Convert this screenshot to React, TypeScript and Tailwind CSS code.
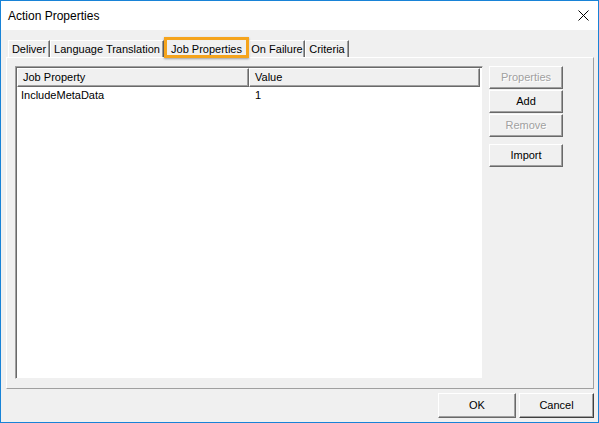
import React from "react";

/** Classic Win32 dialog: Action Properties with the Job Properties tab selected. */

const font = { fontFamily: '"Liberation Sans", Arial, sans-serif' };

interface TabDef { label: string; w: string; selected?: boolean }

const tabs: TabDef[] = [
  { label: "Deliver", w: "w-[42px]" },
  { label: "Language Translation", w: "w-[114px]" },
  { label: "Job Properties", w: "w-[85px]", selected: true },
  { label: "On Failure", w: "w-[56px]" },
  { label: "Criteria", w: "w-[44px]" },
];

function Tab({ t }: { t: TabDef }) {
  if (t.selected) {
    return (
      <div className={`${t.w} relative z-10 -mb-px h-[21px] bg-[#f0f0f0] border-[3px] border-[#f5a41c] shadow-[0_1px_2px_rgba(0,0,0,0.35)] flex items-start justify-center pt-[1px] text-[11px] text-black`}>
        {t.label}
      </div>
    );
  }
  return (
    <div className={`${t.w} h-[17px] bg-[#f0f0f0] border-l border-t border-white border-r border-r-[#696969] shadow-[inset_-1px_0_0_#a0a0a0] flex items-center justify-center pt-[1px] text-[11px] text-black`}>
      {t.label}
    </div>
  );
}

function SideButton({ label, disabled, className = "" }: { label: string; disabled?: boolean; className?: string }) {
  return (
    <div className={`w-[74px] h-[23px] bg-[#f0f0f0] border-t border-l border-white border-r border-b border-r-[#696969] border-b-[#696969] shadow-[inset_-1px_-1px_0_#a0a0a0] flex items-center justify-center text-[11px] ${disabled ? "text-[#a0a0a0] [text-shadow:1px_1px_0_#fff]" : "text-black"} ${className}`}>
      {label}
    </div>
  );
}

function DialogButton({ label, w, dark }: { label: string; w: string; dark?: boolean }) {
  return (
    <div className={`${w} h-[25px] bg-[#f0f0f0] border-t border-l border-white border-r border-b ${dark ? "border-r-[#404040] border-b-[#404040]" : "border-r-[#696969] border-b-[#696969]"} shadow-[inset_-1px_-1px_0_#a0a0a0] flex items-center justify-center text-[11px] text-black`}>
      {label}
    </div>
  );
}

export default function App() {
  return (
    <div style={font} className="w-[599px] h-[423px] border border-[#1883d7] bg-[#f0f0f0] flex flex-col overflow-hidden">
      {/* Title bar */}
      <div className="h-[29px] bg-white flex items-center justify-between pl-[7px] pr-[8px] shrink-0">
        <span className="text-[12px] text-black">Action Properties</span>
        <svg width="11" height="11" viewBox="0 0 11 11" className="mr-[1px]">
          <path d="M0.5 0.5 L10.5 10.5 M10.5 0.5 L0.5 10.5" stroke="#000" strokeWidth="1" />
        </svg>
      </div>

      {/* Tab strip */}
      <div className="pl-[7px] pt-[7px] flex items-end h-[27px] shrink-0">
        {tabs.map((t) => (
          <Tab key={t.label} t={t} />
        ))}
      </div>

      {/* Tab panel */}
      <div className="ml-[5px] w-[588px] h-[332px] border-l border-t border-white border-r border-b border-r-[#a0a0a0] border-b-[#a0a0a0] flex pt-[8px] pl-[8px] shrink-0">
        {/* List view */}
        <div className="w-[468px] h-[313px] bg-white border-t border-l border-[#a0a0a0] border-r border-b border-r-[#f0f0f0] border-b-[#f0f0f0] shadow-[inset_1px_1px_0_#696969] pl-px pt-px flex flex-col">
          <div className="flex h-[19px] shrink-0">
            <div className="w-[232px] h-full bg-[#f0f0f0] border-t border-l border-white border-r border-b border-r-[#696969] border-b-[#696969] shadow-[inset_-1px_-1px_0_#a0a0a0] flex items-center pl-[5px] text-[11px] text-black">
              Job Property
            </div>
            <div className="w-[231px] h-full bg-[#f0f0f0] border-t border-l border-white border-r border-b border-r-[#696969] border-b-[#696969] shadow-[inset_-1px_-1px_0_#a0a0a0] flex items-center pl-[5px] text-[11px] text-black">
              Value
            </div>
          </div>
          <div className="flex h-[17px] items-center text-[11px] text-black">
            <span className="w-[232px] pl-[4px]">IncludeMetaData</span>
            <span className="pl-[6px]">1</span>
          </div>
        </div>

        {/* Side buttons */}
        <div className="ml-[6px] flex flex-col">
          <SideButton label="Properties" disabled />
          <SideButton label="Add" className="mt-[1px]" />
          <SideButton label="Remove" disabled className="mt-[1px]" />
          <SideButton label="Import" className="mt-[7px]" />
        </div>
      </div>

      {/* Footer buttons */}
      <div className="flex justify-end gap-[3px] pt-[4px] pr-[4px]">
        <DialogButton label="OK" w="w-[78px]" />
        <DialogButton label="Cancel" w="w-[75px]" dark />
      </div>
    </div>
  );
}
